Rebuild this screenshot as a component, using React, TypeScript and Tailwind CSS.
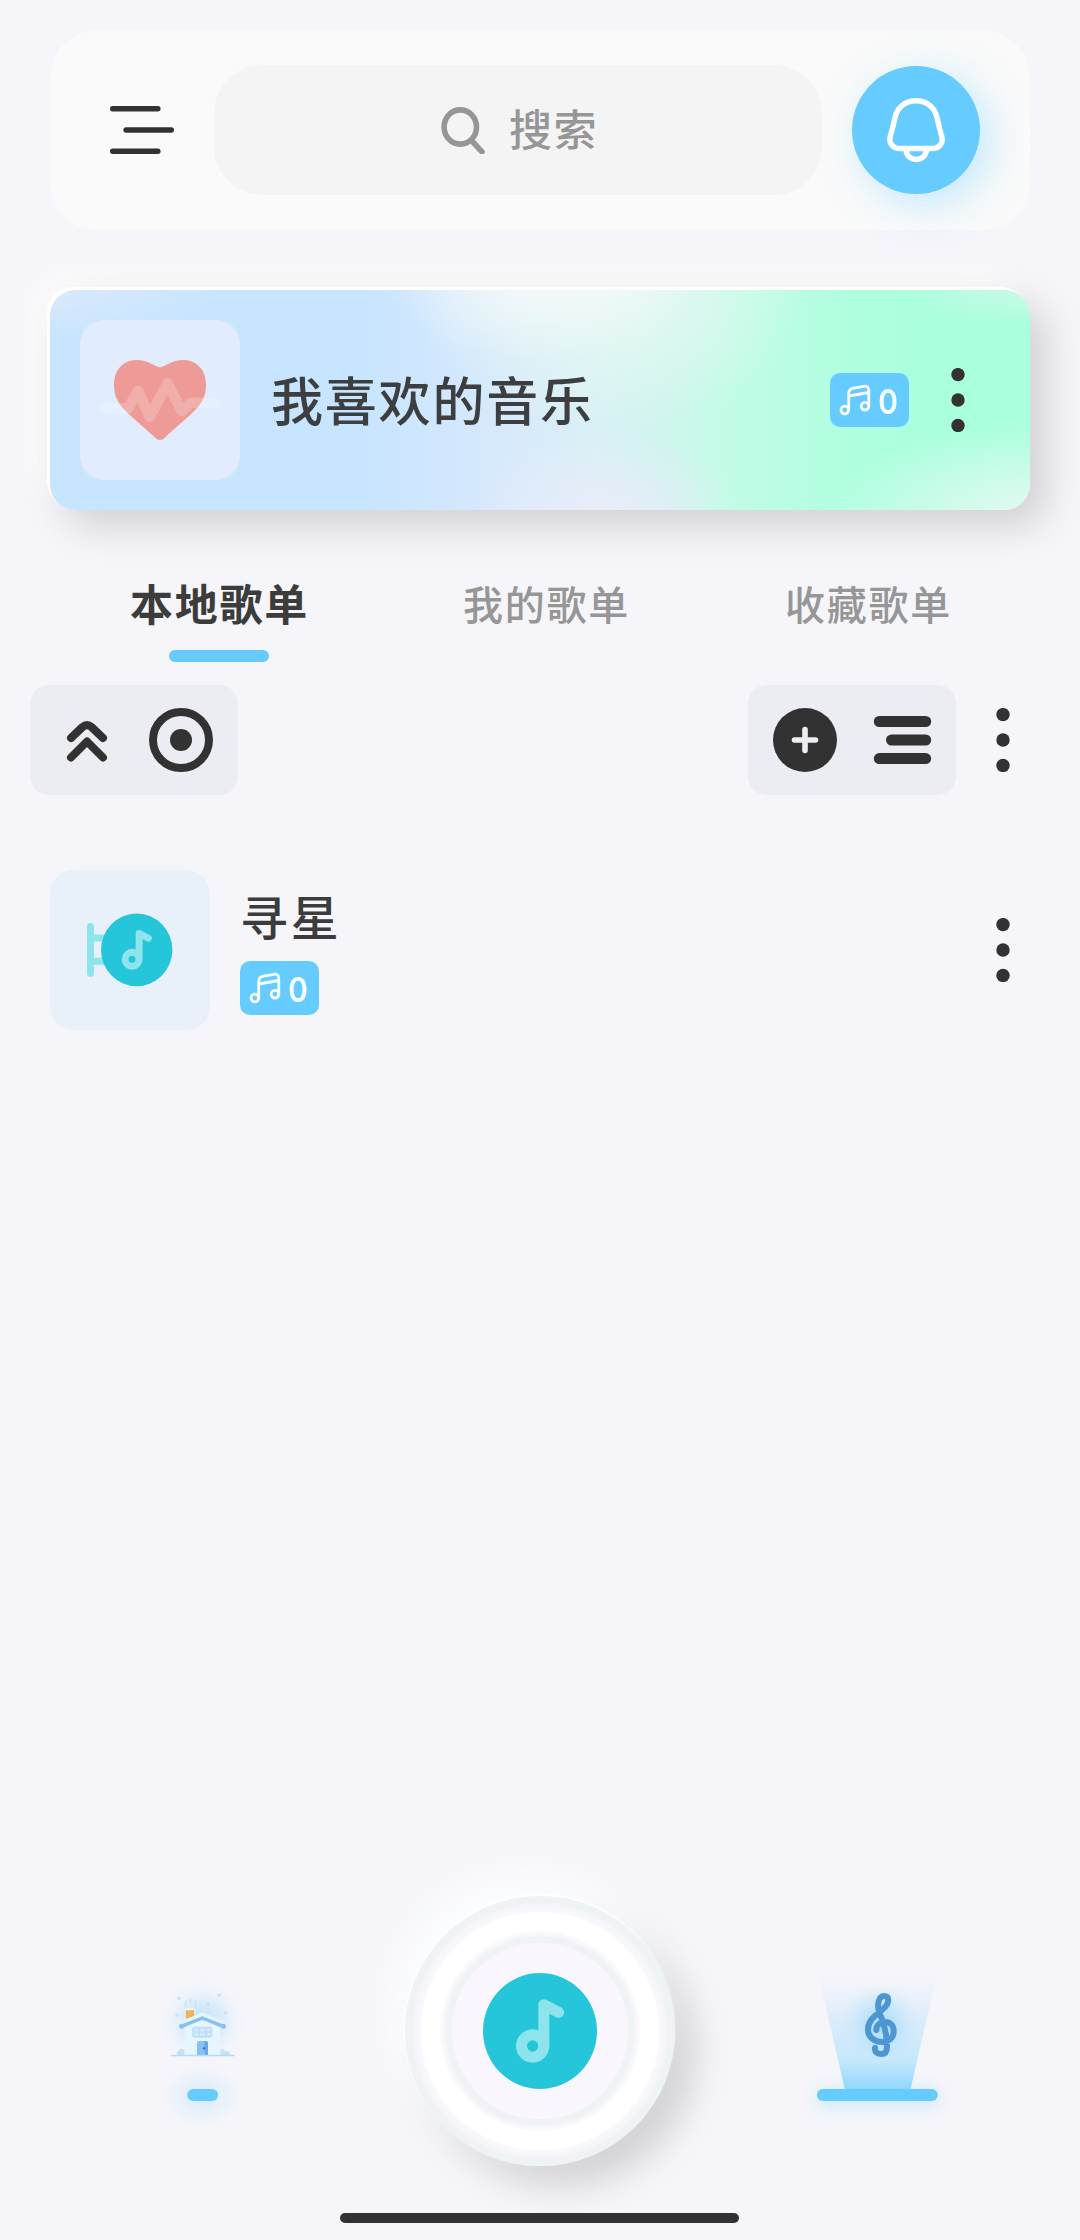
import React from "react";

function Dots() {
  return (
    <svg width="14" height="64" viewBox="0 0 14 64" fill="#323232">
      <circle cx="7" cy="6.6" r="6.7" />
      <circle cx="7" cy="32" r="6.7" />
      <circle cx="7" cy="57.4" r="6.7" />
    </svg>
  );
}

function CountBadge() {
  return (
    <div className="flex h-[54px] w-[79px] items-center rounded-[10px] bg-[#66ccff]">
      <svg width="46" height="54" viewBox="0 0 46 54" fill="none" stroke="#f8feff" strokeWidth="2.8" className="shrink-0">
        <circle cx="14.8" cy="37" r="3.8" />
        <circle cx="35" cy="33.2" r="3.8" />
        <path d="M18.7 37V20.6c0-3 1.8-5 4.8-5.5l10.4-1.8c3-.5 4.9 1.1 4.9 4V33.2M18.7 23l20-3.5" />
      </svg>
      <span className="mt-[3px] w-[24px] text-center font-['Inter'] text-[34px] font-semibold leading-none text-[#f8feff]"><span className="inline-block scale-x-[.88]">0</span></span>
    </div>
  );
}

function RecordNote() {
  return (
    <>
      <ellipse rx="171" ry="174" fill="#26c6da" />
      <g fill="none" stroke="#8ee4ed" strokeWidth="33" strokeLinecap="round" strokeLinejoin="round">
        <circle cx="-22" cy="45" r="33.5" />
        <path d="M11.5 45V-79L56 -56" />
      </g>
    </>
  );
}

function Header() {
  return (
    <header className="mx-[50px] mt-[30px] flex h-[200px] items-center rounded-[48px] bg-[#fafafa] pl-[60px] pr-[50px]">
      <svg width="64" height="48" viewBox="0 0 64 48" stroke="#323232" strokeWidth="5.4" strokeLinecap="round">
        <path d="M2.7 2.7H47.9M16.1 24H61.3M2.7 45.3H47.9" />
      </svg>
      <div className="ml-[40px] flex h-[130px] w-[608px] items-center rounded-[48px] bg-[#f4f4f4] pl-[226px] text-[#969696]">
        <svg width="46" height="48" viewBox="0 0 46 48" fill="none" stroke="currentColor" strokeWidth="5.6" strokeLinecap="round">
          <ellipse cx="20.3" cy="21" rx="16.2" ry="17.1" />
          <path d="M32.5 35.5L42 45.8" />
        </svg>
        <span className="-mt-[5px] ml-[23px] text-[43px] font-medium leading-none tracking-[1.5px]">搜索</span>
      </div>
      <button className="ml-[30px] flex size-[128px] items-center justify-center rounded-full bg-[#66ccff] shadow-[10px_10px_40px_rgba(102,204,255,0.38)]">
        <svg width="64" height="72" viewBox="0 0 64 72" fill="none" stroke="#fff" strokeWidth="5.4">
          <path d="M32 6.800C21 6.800 13.500 13.500 11.300 22.500C9.500 29.500 8.300 36 6.200 42.500C4.500 49 8.500 54.500 16.500 54.500H47.500C55.500 54.500 59.500 49 57.800 42.500C55.700 36 54.500 29.500 52.700 22.500C50.500 13.500 43 6.800 32 6.800Z" />
          <path d="M22 55C22 61.500 26.500 65.500 32.300 65.500C38 65.500 42.500 61.500 42.500 55" />
        </svg>
      </button>
    </header>
  );
}

function FavoriteCard() {
  return (
    <section
      className="mx-[50px] mt-[60px] flex h-[220px] items-center rounded-[26px] pl-[30px] shadow-[-3px_-3px_1px_#fff,15px_15px_40px_rgba(0,0,0,0.16),-14px_-14px_40px_#fefefc]"
      style={{
        background:
          "radial-gradient(ellipse 150px 80px at 50% -4%, rgba(247,247,250,1), rgba(244,248,250,.5) 50%, rgba(240,250,248,0)), radial-gradient(ellipse 200px 150px at 57% -4%, rgba(232,249,245,1), rgba(228,249,243,.6) 50%, rgba(215,250,238,0)), radial-gradient(ellipse 140px 100px at 56.5% 108%, rgba(238,236,249,1), rgba(232,236,250,.6) 50%, rgba(228,236,250,0)), radial-gradient(ellipse 220px 100px at 101% 106%, rgba(236,248,246,1), rgba(226,250,241,.6) 50%, rgba(200,252,230,0)), radial-gradient(ellipse 180px 50px at 0% 0%, rgba(220,233,253,.9), rgba(215,232,253,0)), radial-gradient(ellipse 140px 35px at 101% 0%, rgba(206,249,232,.9), rgba(190,252,226,0)), linear-gradient(90deg, #c7e5ff 0%, #c7e5ff 31%, #d1e7fe 40%, #d9eafb 48%, #d8f1f5 56%, #cef5ed 63%, #c1fce5 70%, #afffdf 82%, #aaffdd 90%)",
      }}
    >
      <svg width="160" height="160" viewBox="0 0 160 160" className="rounded-[24px] bg-[#e1edff]">
        <path fill="#ee9b98" d="M80 47.500C74 46 68 40 57 40C43 40 34 50 34 65C34 86 48 92 76 118.500Q80 121.500 84 118.500C112 92 126 86 126 65C126 50 117 40 103 40C92 40 86 46 80 47.500Z" />
        <path fill="none" stroke="#fff" strokeOpacity="0.2" strokeWidth="10.500" strokeLinecap="round" strokeLinejoin="round" d="M25.700 88.300H48L58 71L69.800 96.700L87.700 63.300L101.800 91L111 82.700H134" />
      </svg>
      <h2 className="-mt-[2px] ml-[31px] w-[559px] text-[52px] font-medium leading-none tracking-[1.8px] text-[#3c3e40]">我喜欢的音乐</h2>
      <CountBadge />
      <div className="ml-[42px]">
        <Dots />
      </div>
    </section>
  );
}

function Tabs() {
  return (
    <nav className="mt-[50px] flex h-[125px] pl-[50px] font-medium leading-none text-[#969696]">
      <div className="flex w-[337px] flex-col items-center pt-[21px] text-[43px] font-bold text-[#3c3c3c]">
        <span className="h-[69px] pl-[2px] tracking-[1.7px]">本地歌单</span>
        <span className="h-3 w-[100px] rounded-full bg-[#66ccff]" />
      </div>
      <div className="w-[319px] pt-[23px] text-center text-[40px] tracking-[1.800px]">我的歌单</div>
      <div className="w-[325px] pt-[23px] text-center text-[40px] tracking-[1.800px]">收藏歌单</div>
    </nav>
  );
}

function Toolbar() {
  return (
    <div className="flex h-[110px] items-center pl-[30px]">
      <div className="flex h-full w-[208px] items-center rounded-[19px] bg-[#ecedf2]">
        <svg width="208" height="110" viewBox="0 0 208 110" fill="none" stroke="#323232" strokeWidth="8" strokeLinecap="round" strokeLinejoin="round">
          <path d="M41 53L52.500 42Q57 38.200 61.500 42L73 53M41 72.500L57 56.500L73 72.500" />
          <circle cx="151" cy="55" r="28" />
          <circle cx="151" cy="55" r="11" fill="#323232" stroke="none" />
        </svg>
      </div>
      <div className="ml-[510px] flex h-full w-[208px] items-center rounded-[19px] bg-[#ecedf2]">
        <svg width="208" height="110" viewBox="0 0 208 110" fill="none" strokeLinecap="round">
          <circle cx="57" cy="55" r="32" fill="#323232" />
          <path d="M57 44.500V65.500M46.500 55H67.500" stroke="#ecedf2" strokeWidth="5.600" />
          <path d="M131.300 36.500H177.700M143.500 55H177.700M131.300 73.600H177.700" stroke="#323232" strokeWidth="11" />
        </svg>
      </div>
      <div className="ml-[40px]">
        <Dots />
      </div>
    </div>
  );
}

function PlaylistRow() {
  return (
    <div className="mt-[75px] flex h-[160px] items-center pl-[50px]">
      <svg width="160" height="160" viewBox="0 0 160 160" className="rounded-[24px] bg-[#e8f1f9]">
        <path d="M40.500 56.500V103.300M43 68H60M43 91.300H60" stroke="#8fe3ec" strokeWidth="7" strokeLinecap="round" />
        <g transform="translate(86.7 79.9) scale(.2087)">
          <RecordNote />
        </g>
      </svg>
      <div className="ml-[30px] w-[756px] pt-[5px]">
        <h3 className="mb-[21px] text-[48px] font-medium leading-[50px] tracking-[2.800px] text-[#3c3c3c]">寻星</h3>
        <CountBadge />
      </div>
      <Dots />
    </div>
  );
}

function HomeTab() {
  return (
    <svg width="130" height="170" viewBox="0 0 390 510" className="mt-[100px] shrink-0">
      <defs>
        <radialGradient id="homeGlow">
          <stop offset="0" stopColor="#bfe2fb" />
          <stop offset=".45" stopColor="#d4eafb" stopOpacity=".85" />
          <stop offset="1" stopColor="#f0f4fb" stopOpacity="0" />
        </radialGradient>
        <radialGradient id="pillGlow">
          <stop offset="0" stopColor="#66ccff" stopOpacity=".24" />
          <stop offset=".5" stopColor="#66ccff" stopOpacity=".1" />
          <stop offset="1" stopColor="#66ccff" stopOpacity="0" />
        </radialGradient>
      </defs>
      <circle cx="188" cy="186" r="128" fill="url(#homeGlow)" />
      <g fill="#c8e2f8">
        <circle cx="117" cy="115" r="5.500" />
        <circle cx="238" cy="106" r="5.500" />
        <circle cx="203" cy="132" r="5.500" />
        <circle cx="257" cy="158" r="5.500" />
        <circle cx="111" cy="165" r="5.500" />
      </g>
      <path d="M139 140q-6-8 0-17M152 130q-5-6 0-12M165 140q6-8 0-17" fill="none" stroke="#c9e3f7" strokeWidth="5" strokeLinecap="round" />
      <path d="M111 285c0-12 7-19 14-19s10 8 10 19zM228 285c2-12 8-18 16-18 7 0 8 5 12 6 8-2 13 5 16 12z" fill="#c6e2f9" />
      <path d="M134 204L187 177L241 204V286H134Z" fill="#e5f6fe" />
      <path d="M138 150h24v26h-24z" fill="#f4b14f" />
      <path d="M135 148h30" stroke="#e8f5fd" strokeWidth="6" />
      <path d="M124 190L187 164L251 190" fill="none" stroke="#e5f5fd" strokeWidth="13" strokeLinecap="round" strokeLinejoin="round" />
      <path d="M124 199L187 174L250 199" fill="none" stroke="#89c0f3" strokeWidth="10" strokeLinecap="round" strokeLinejoin="round" />
      <circle cx="125" cy="199" r="7.500" fill="#89c0f3" />
      <circle cx="250" cy="199" r="7.500" fill="#89c0f3" />
      <rect x="157" y="200" width="60" height="33" rx="6" fill="#c0dff7" />
      <path d="M163 206h12v8h-12zM180 206h15v8h-15zM200 206h11v8h-11zM163 219h12v8h-12zM180 219h15v8h-15zM200 219h11v8h-11z" fill="#d6ebfb" />
      <path d="M171 286v-36q0-7 7-7h19q7 0 7 7v36z" fill="#86c0f5" />
      <path d="M193 243h4q7 0 7 7v36h-9z" fill="#63a8ec" />
      <circle cx="192" cy="265" r="3.500" fill="#4a6390" />
      <path d="M93 286.500H283" stroke="#b5dafa" strokeWidth="4" />
      <ellipse cx="187" cy="408" rx="118" ry="90" fill="url(#pillGlow)" />
      <rect x="142" y="387" width="92" height="36" rx="17" fill="#66ccff" />
    </svg>
  );
}

function PlayerKnob() {
  return (
    <button
      className="flex size-[270px] shrink-0 items-center justify-center rounded-full shadow-[-1px_-2px_3px_#fff,-16px_-24px_45px_#fdfeff,20px_20px_36px_rgba(0,0,0,0.15)]"
      style={{
        background:
          "radial-gradient(circle closest-side, #faf6fe 0 88px, #eff3f6 88.500px 94px, #f5f5f9 95px, #fafafc 99px, #fff 100.500px 119px, #f9f8fc 119.500px, #f5f5f9 127px, #eff3f6 128px)",
      }}
    >
      <svg width="114" height="116" viewBox="-171 -174 342 348">
        <RecordNote />
      </svg>
    </button>
  );
}

function MusicTab() {
  return (
    <svg width="200" height="180" viewBox="0 0 600 540" className="mt-[90px] shrink-0">
      <defs>
        <linearGradient id="beam" x1="0" y1="0" x2="0" y2="1">
          <stop offset="0" stopColor="#eaf2fb" stopOpacity="0" />
          <stop offset=".3" stopColor="#e1eefa" />
          <stop offset=".75" stopColor="#c5e7fc" />
          <stop offset="1" stopColor="#8fd7fd" />
        </linearGradient>
        <radialGradient id="clefGlow">
          <stop offset="0" stopColor="#a5d8fa" stopOpacity=".9" />
          <stop offset=".5" stopColor="#b8e1fb" stopOpacity=".6" />
          <stop offset="1" stopColor="#d0ebfb" stopOpacity="0" />
        </radialGradient>
        <filter id="barGlow" x="-30%" y="-300%" width="160%" height="700%">
          <feGaussianBlur stdDeviation="24" />
        </filter>
      </defs>
      <rect x="112" y="423" width="362" height="42" rx="20" fill="#66ccff" opacity=".35" filter="url(#barGlow)" />
      <path d="M116 76H470L391 420H195Z" fill="url(#beam)" />
      <circle cx="302" cy="225" r="125" fill="url(#clefGlow)" />
      <rect x="111" y="417" width="362" height="36" rx="17" fill="#66ccff" />
      <path
        d="M285 293C283 306 291 312 303 312C316 312 321 303 321 290L319 262C316 235 306 205 299 190C289 166 296 138 312 138C328 138 328 157 316 170C300 188 264 205 264 238C264 262 284 276 306 276C328 276 341 262 341 244C341 226 330 216 316 216C300 216 289 226 289 240"
        fill="none"
        stroke="#4b96d3"
        strokeWidth="18"
        strokeLinecap="round"
        strokeLinejoin="round"
      />
    </svg>
  );
}

export default function App() {
  return (
    <main className="flex h-[2240px] w-[1080px] flex-col overflow-hidden bg-[#f5f5fa] font-['Noto_Sans_CJK_SC','Noto_Sans',sans-serif]">
      <Header />
      <FavoriteCard />
      <Tabs />
      <Toolbar />
      <PlaylistRow />
      <footer className="mt-auto flex h-[344px] flex-col">
        <div className="flex h-[270px] items-start pl-[140px]">
          <div className="-mt-[36px] w-[265px]">
            <HomeTab />
          </div>
          <PlayerKnob />
          <div className="-mt-[36px] ml-[105px]">
            <MusicTab />
          </div>
        </div>
        <div className="ml-[340px] mt-[47px] h-[10px] w-[399px] rounded-full bg-[#323232]" />
      </footer>
    </main>
  );
}
